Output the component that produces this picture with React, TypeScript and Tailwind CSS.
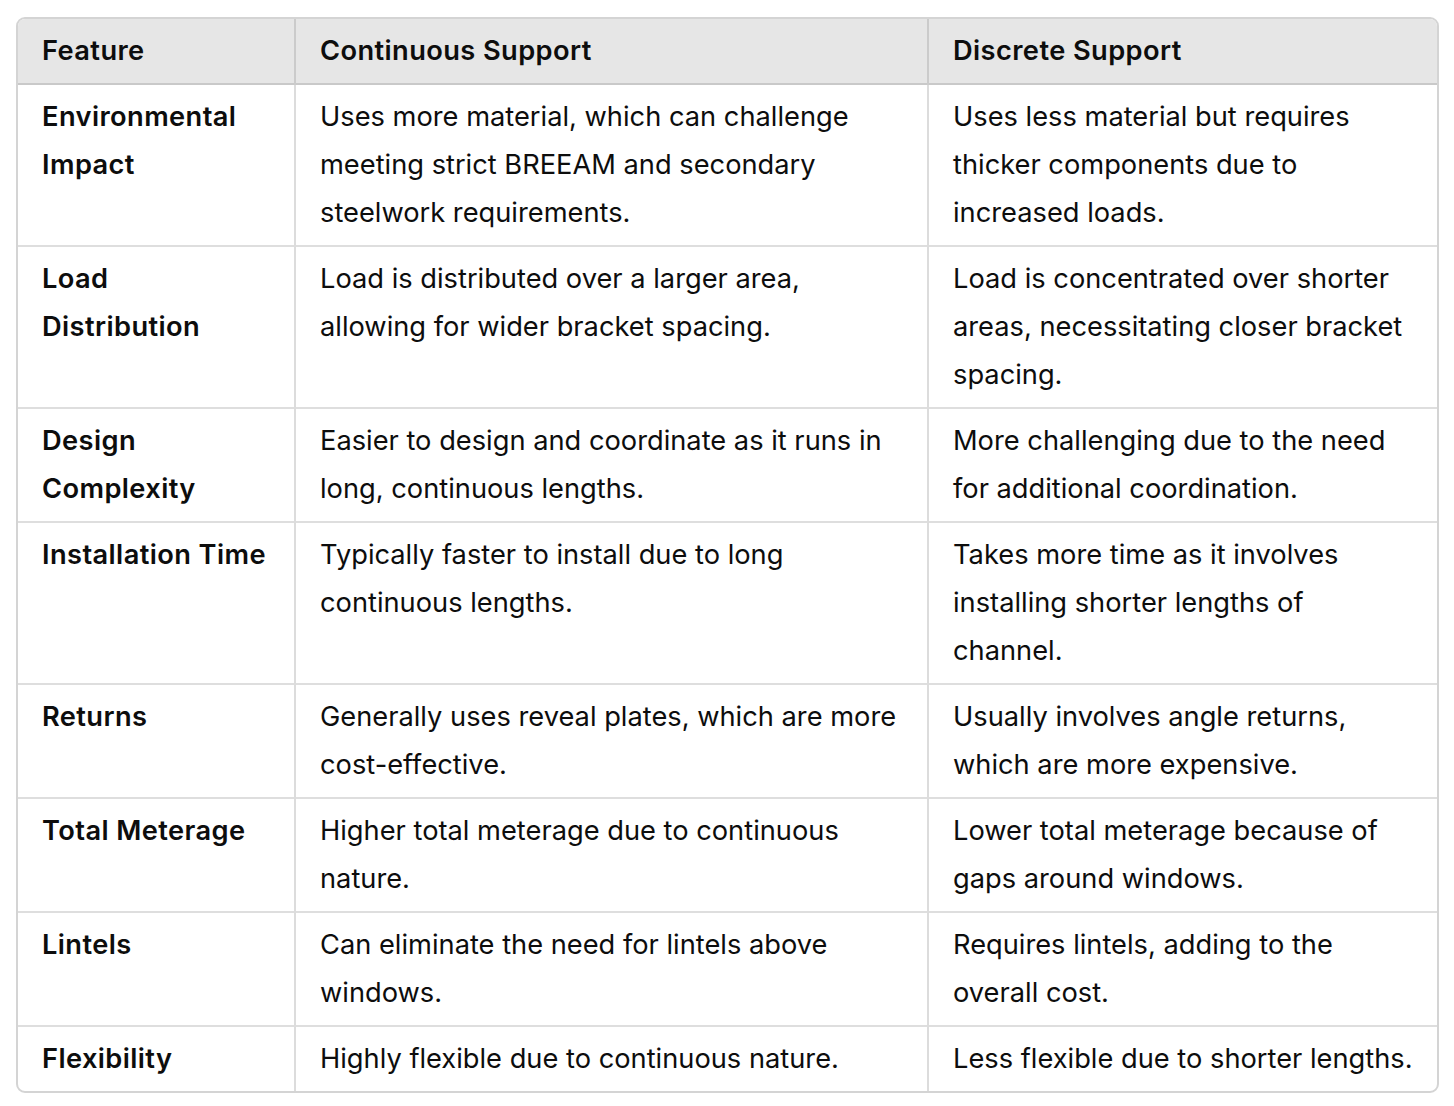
const rows: [string, string, string][] = [
  [
    'Environmental Impact',
    'Uses more material, which can challenge meeting strict BREEAM and secondary steelwork requirements.',
    'Uses less material but requires thicker components due to increased loads.',
  ],
  [
    'Load Distribution',
    'Load is distributed over a larger area, allowing for wider bracket spacing.',
    'Load is concentrated over shorter areas, necessitating closer bracket spacing.',
  ],
  [
    'Design Complexity',
    'Easier to design and coordinate as it runs in long, continuous lengths.',
    'More challenging due to the need for additional coordination.',
  ],
  [
    'Installation Time',
    'Typically faster to install due to long continuous lengths.',
    'Takes more time as it involves installing shorter lengths of channel.',
  ],
  ['Returns', 'Generally uses reveal plates, which are more cost-effective.', 'Usually involves angle returns, which are more expensive.'],
  ['Total Meterage', 'Higher total meterage due to continuous nature.', 'Lower total meterage because of gaps around windows.'],
  ['Lintels', 'Can eliminate the need for lintels above windows.', 'Requires lintels, adding to the overall cost.'],
  ['Flexibility', 'Highly flexible due to continuous nature.', 'Less flexible due to shorter lengths.'],
];

export default function App() {
  return (
    <div className="min-h-screen bg-white pt-[17px] pl-[16px] font-['Inter',sans-serif] text-[27.25px] leading-[48px] text-[#0d0d0d]">
      <div className="w-[1423px] overflow-hidden rounded-[9px] border-2 border-[#d4d4d4]">
        <table className="w-full table-fixed border-collapse">
          <colgroup>
            <col className="w-[277px]" />
            <col className="w-[633px]" />
            <col />
          </colgroup>
          <thead>
            <tr className="bg-[#e6e6e6] border-b-2 border-[#c9c9c9]">
              <th className="pl-[24px] pr-[24px] pt-[8px] pb-[8px] text-left font-semibold tracking-[0.4px]">Feature</th>
              <th className="border-l-2 border-[#cbcbcb] px-[24px] pt-[8px] pb-[8px] text-left font-semibold tracking-[0.4px]">Continuous Support</th>
              <th className="border-l-2 border-[#cbcbcb] px-[24px] pt-[8px] pb-[8px] text-left font-semibold tracking-[0.4px]">Discrete Support</th>
            </tr>
          </thead>
          <tbody>
            {rows.map(([feature, cont, disc], i) => (
              <tr key={feature} className={i < rows.length - 1 ? 'border-b-2 border-[#dedede]' : ''}>
                <td className="pl-[24px] pr-[24px] pt-[8px] pb-[8px] align-top font-semibold tracking-[0.4px]">{feature}</td>
                <td className="border-l-2 border-[#dcdcdc] px-[24px] pt-[8px] pb-[8px] align-top">{cont}</td>
                <td className="border-l-2 border-[#dcdcdc] px-[24px] pt-[8px] pb-[8px] align-top">{disc}</td>
              </tr>
            ))}
          </tbody>
        </table>
      </div>
    </div>
  );
}
